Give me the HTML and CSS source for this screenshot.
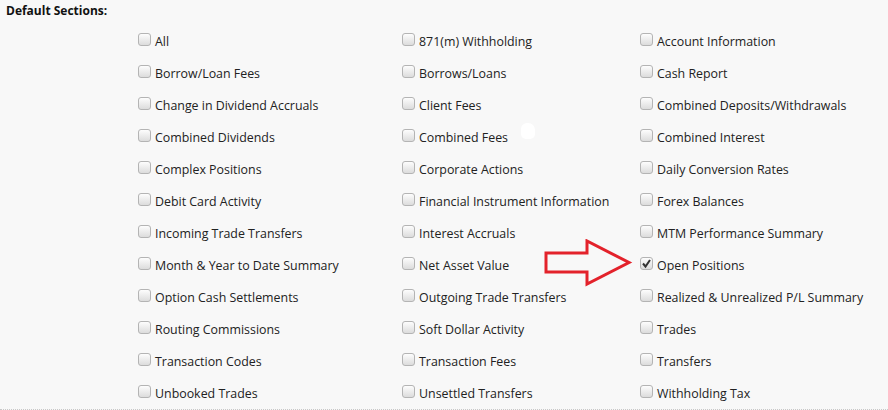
FILE: index.html
```html
<!DOCTYPE html>
<html lang="en">
<head>
    <meta charset="UTF-8">
    <title>Default Sections</title>
    <link rel="stylesheet" href="styles.css">
</head>
<body>
    <div class="panel">
        <h3 class="title">Default Sections:</h3>

        <div class="sections">
            <label class="item"><span class="box"></span>All</label>
            <label class="item"><span class="box"></span>871(m) Withholding</label>
            <label class="item"><span class="box"></span>Account Information</label>

            <label class="item"><span class="box"></span>Borrow/Loan Fees</label>
            <label class="item"><span class="box"></span>Borrows/Loans</label>
            <label class="item"><span class="box"></span>Cash Report</label>

            <label class="item"><span class="box"></span>Change in Dividend Accruals</label>
            <label class="item"><span class="box"></span>Client Fees</label>
            <label class="item"><span class="box"></span>Combined Deposits/Withdrawals</label>

            <label class="item"><span class="box"></span>Combined Dividends</label>
            <label class="item"><span class="box"></span>Combined Fees</label>
            <label class="item"><span class="box"></span>Combined Interest</label>

            <label class="item"><span class="box"></span>Complex Positions</label>
            <label class="item"><span class="box"></span>Corporate Actions</label>
            <label class="item"><span class="box"></span>Daily Conversion Rates</label>

            <label class="item"><span class="box"></span>Debit Card Activity</label>
            <label class="item"><span class="box"></span>Financial Instrument Information</label>
            <label class="item"><span class="box"></span>Forex Balances</label>

            <label class="item"><span class="box"></span>Incoming Trade Transfers</label>
            <label class="item"><span class="box"></span>Interest Accruals</label>
            <label class="item"><span class="box"></span>MTM Performance Summary</label>

            <label class="item"><span class="box"></span>Month &amp; Year to Date Summary</label>
            <label class="item"><span class="box"></span>Net Asset Value</label>
            <label class="item"><span class="box checked"><svg width="11" height="11" viewBox="0 0 11 11"><path d="M2 5.5 L4.5 8.5 L9 2" fill="none" stroke="#333" stroke-width="2"/></svg></span>Open Positions</label>

            <label class="item"><span class="box"></span>Option Cash Settlements</label>
            <label class="item"><span class="box"></span>Outgoing Trade Transfers</label>
            <label class="item"><span class="box"></span>Realized &amp; Unrealized P/L Summary</label>

            <label class="item"><span class="box"></span>Routing Commissions</label>
            <label class="item"><span class="box"></span>Soft Dollar Activity</label>
            <label class="item"><span class="box"></span>Trades</label>

            <label class="item"><span class="box"></span>Transaction Codes</label>
            <label class="item"><span class="box"></span>Transaction Fees</label>
            <label class="item"><span class="box"></span>Transfers</label>

            <label class="item"><span class="box"></span>Unbooked Trades</label>
            <label class="item"><span class="box"></span>Unsettled Transfers</label>
            <label class="item"><span class="box"></span>Withholding Tax</label>
        </div>

        <!-- annotation arrow pointing at Open Positions -->
        <svg class="arrow" width="90" height="48" viewBox="0 0 90 48">
            <polygon points="2,14 43,14 43,2 85,23.5 43,45 43,33 2,33" fill="none" stroke="#e3222b" stroke-width="3" stroke-linejoin="miter"/>
        </svg>
        <span class="blob"></span>
    </div>
</body>
</html>
```

FILE: styles.css
```css
body {
    margin: 0;
    background-color: #f8f8f8;
    font-family: "Open Sans", "Liberation Sans", sans-serif;
    color: #222;
}
.panel {
    position: relative;
    height: 409px;
    border-bottom: 1px dotted #c8c8c8;
}
.title {
    margin: 0;
    padding: 2px 0 0 6px;
    height: 23px;
    font-size: 12px;
    font-weight: bold;
    color: #111;
}
.sections {
    display: grid;
    grid-template-columns: 264px 238px 1fr;
    grid-auto-rows: 32px;
    margin-left: 138px;
}
.item {
    display: flex;
    align-items: center;
    gap: 4px;
    font-size: 12.4px;
}
.box {
    display: inline-flex;
    align-items: center;
    justify-content: center;
    width: 11px;
    height: 11px;
    border: 1px solid #b4b4b4;
    border-radius: 3px;
    background: linear-gradient(#fdfdfd, #dcdcdc);
    margin-top: -3px;
}
.arrow {
    position: absolute;
    left: 544px;
    top: 239px;
}
.blob {
    position: absolute;
    left: 521px;
    top: 123px;
    width: 14px;
    height: 16px;
    border-radius: 6px 7px 5px 5px;
    background: #fff;
}
```
